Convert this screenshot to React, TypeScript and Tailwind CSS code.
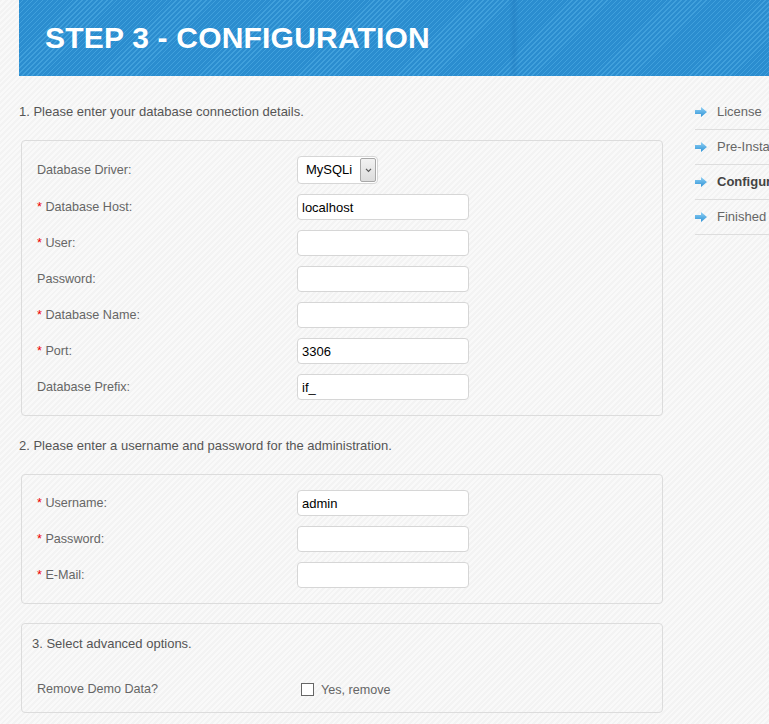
const DB_ROWS = [
  { label: "* Database Host:", value: "localhost" },
  { label: "* User:", value: "" },
  { label: "Password:", value: "" },
  { label: "* Database Name:", value: "" },
  { label: "* Port:", value: "3306" },
  { label: "Database Prefix:", value: "if_" },
];

const ADMIN_ROWS = [
  { label: "* Username:", value: "admin" },
  { label: "* Password:", value: "" },
  { label: "* E-Mail:", value: "" },
];

const STEPS = [
  { name: "License", active: false },
  { name: "Pre-Installation Check", active: false },
  { name: "Configuration", active: true },
  { name: "Finished", active: false },
];

function Label({ text }: { text: string }) {
  const required = text.startsWith("* ");
  return (
    <span className="w-[260px] shrink-0 text-[12.6px] text-[#666]">
      {required && <span className="text-[#e00]">* </span>}
      {required ? text.slice(2) : text}
    </span>
  );
}

function TextField({ value }: { value: string }) {
  return (
    <input
      type="text"
      defaultValue={value}
      className="h-[26px] w-[172px] rounded-[4px] border border-[#d6d6d6] bg-white px-[4px] text-[13px] text-black outline-none"
    />
  );
}

function Arrow() {
  return (
    <svg viewBox="0 0 12 10" className="h-[10px] w-[12px] shrink-0" aria-hidden="true">
      <defs>
        <linearGradient id="arr" x1="0" y1="0" x2="0" y2="1">
          <stop offset="0" stopColor="#8fd0f5" />
          <stop offset="1" stopColor="#2f93d6" />
        </linearGradient>
      </defs>
      <path d="M0 3h6V0l6 5-6 5V7H0z" fill="url(#arr)" />
    </svg>
  );
}

export default function App() {
  return (
    <div
      className="min-h-[724px] w-full overflow-hidden bg-[repeating-linear-gradient(135deg,#f3f3f3_0px,#f3f3f3_2px,#f9f9f9_2px,#f9f9f9_4px)] pl-[19px]"
      style={{ fontFamily: '"Liberation Sans", Arial, sans-serif' }}
    >
      <div className="w-[940px]">
        {/* Header */}
        <div className="flex h-[76px] bg-[repeating-linear-gradient(135deg,#2b8dcf_0px,#2b8dcf_2.5px,#40a0dc_2.5px,#40a0dc_3.5px)]">
          <div className="flex w-[490px] items-center pl-[26px]">
            <h1 className="text-[30px] font-bold leading-none tracking-[0.2px] text-white">
              STEP 3 - CONFIGURATION
            </h1>
          </div>
          <div className="w-[10px] bg-[linear-gradient(90deg,rgba(20,100,170,0),rgba(20,100,170,0.2),rgba(20,100,170,0))]" />
          <div className="flex-1" />
        </div>

        <div className="flex gap-[32px]">
          {/* Main column */}
          <div className="w-[644px]">
            <p className="mt-[28px] text-[13px] leading-[15px] text-[#555]">
              1. Please enter your database connection details.
            </p>
            <div className="ml-[2px] mt-[21px] flex flex-col gap-[10px] rounded-[4px] border border-[#dcdcdc] px-[15px] py-[15px]">
              <div className="flex h-[28px] items-center">
                <Label text="Database Driver:" />
                <div className="flex h-[28px] w-[81px] items-center justify-between rounded-[4px] border border-[#d6d6d6] bg-white pl-[8px] pr-[1px]">
                  <span className="text-[13px] text-black">MySQLi</span>
                  <span className="flex h-[24px] w-[16px] items-center justify-center rounded-[2px] border border-[#a8a8a8] bg-[linear-gradient(#f2f2f2,#dcdcdc)]">
                    <svg viewBox="0 0 8 6" className="h-[5px] w-[7px]" aria-hidden="true">
                      <path d="M1 1l3 3 3-3" fill="none" stroke="#555" strokeWidth="1.4" />
                    </svg>
                  </span>
                </div>
              </div>
              {DB_ROWS.map((row) => (
                <div key={row.label} className="flex h-[26px] items-center">
                  <Label text={row.label} />
                  <TextField value={row.value} />
                </div>
              ))}
            </div>

            <p className="mt-[22px] text-[13px] leading-[15px] text-[#555]">
              2. Please enter a username and password for the administration.
            </p>
            <div className="ml-[2px] mt-[21px] flex flex-col gap-[10px] rounded-[4px] border border-[#dcdcdc] px-[15px] py-[15px]">
              {ADMIN_ROWS.map((row) => (
                <div key={row.label} className="flex h-[26px] items-center">
                  <Label text={row.label} />
                  <TextField value={row.value} />
                </div>
              ))}
            </div>

            <div className="ml-[2px] mt-[19px] rounded-[4px] border border-[#dcdcdc] px-[15px] pb-[10px] pt-[12px]">
              <p className="-ml-[5px] text-[13px] leading-[16px] text-[#555]">3. Select advanced options.</p>
              <div className="mt-[24px] flex h-[26px] items-center">
                <Label text="Remove Demo Data?" />
                <span className="ml-[4px] h-[13px] w-[13px] border border-[#666] bg-white" />
                <span className="ml-[7px] mt-[2px] text-[12.6px] text-[#666]">Yes, remove</span>
              </div>
            </div>
          </div>

          {/* Steps */}
          <ul className="mt-[19px] w-[220px]">
            {STEPS.map((step) => (
              <li
                key={step.name}
                className="flex h-[35px] items-center gap-[10px] whitespace-nowrap border-b border-[#dddddd]"
              >
                <Arrow />
                <span className={step.active ? "text-[13px] font-bold text-[#444]" : "text-[13px] text-[#666]"}>
                  {step.name}
                </span>
              </li>
            ))}
          </ul>
        </div>
      </div>
    </div>
  );
}
